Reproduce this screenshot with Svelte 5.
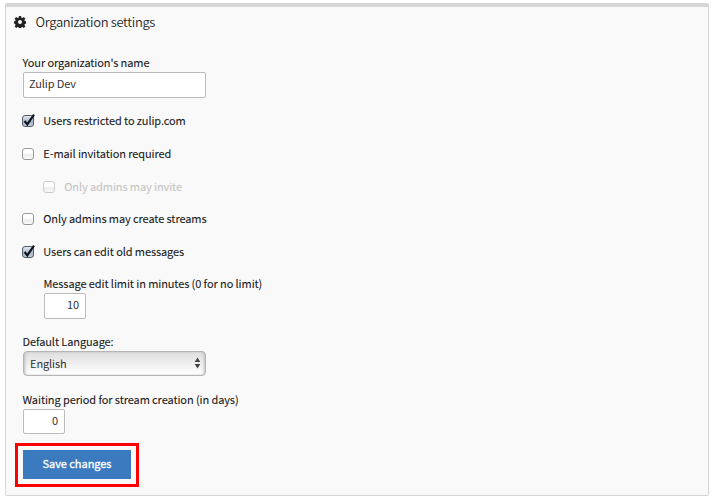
<script>
  let name = $state('Zulip Dev');
  let limit = $state('10');
  let waiting = $state('0');
  const permissions = [
    { text: 'Users restricted to zulip.com', checked: true },
    { text: 'E-mail invitation required', checked: false },
    { text: 'Only admins may invite', checked: false, nested: true },
    { text: 'Only admins may create streams', checked: false },
    { text: 'Users can edit old messages', checked: true }
  ];
</script>

<main class="panel">
  <header>
    <svg class="gear" viewBox="0 0 24 24" width="12" height="12" aria-hidden="true">
      <path fill-rule="evenodd" d="M9.800 0h4.400l.6 3.300 2 .9 2.800-2 3.200 3.200-2 2.800.9 2 3.300.600v4.400l-3.300.6-.9 2 2 2.800-3.200 3.200-2.800-2-2 .9-.6 3.300H9.800l-.6-3.300-2-.9-2.800 2-3.200-3.200 2-2.800-.9-2L0 15.200v-4.400L2.300 10.200l.9-2-2-2.800 3.200-3.200 2.800 2 2-.9zM12 8a4 4 0 1 0 0 8a4 4 0 0 0 0-8z" />
    </svg>
    <h1>Organization settings</h1>
  </header>
  <form onsubmit={(e) => e.preventDefault()}>
    <label for="name" class="caption">Your organization's name</label>
    <input id="name" class="field" bind:value={name} />

    <div class="checks">
      {#each permissions as item}
        <label class="check" class:nested={item.nested}>
          <span class="box" class:on={item.checked}>
            {#if item.checked}
              <svg viewBox="0 0 15 15" width="15" height="15" aria-hidden="true">
                <path d="M3.600 7L6.300 10.400L13 .6" />
              </svg>
            {/if}
          </span>
          <span class="text">{item.text}</span>
        </label>
      {/each}
    </div>

    <div class="inset">
      <label for="limit" class="caption">Message edit limit in minutes (0 for no limit)</label>
      <input id="limit" class="field number" bind:value={limit} />
    </div>

    <label for="language" class="caption language">Default Language:</label>
    <button type="button" id="language" class="select">
      <span class="text">English</span>
      <svg viewBox="0 0 7 12" width="7" height="12" aria-hidden="true">
        <path d="M3.500 .5L6.300 5H.7zM3.500 11.500L.7 7h5.600z" />
      </svg>
    </button>

    <label for="waiting" class="caption period">Waiting period for stream creation (in days)</label>
    <input id="waiting" class="field number short" bind:value={waiting} />

    <div class="highlight"><button class="save">Save changes</button></div>
  </form>
</main>

<style>
  :global(body) { margin: 0; background: #fff; }
  .panel {
    box-sizing: border-box;
    width: 704px;
    height: 493px;
    margin: 3px 0 0 5px;
    border: 1px solid #d6d6d6;
    border-top-width: 4px;
    border-radius: 2px;
    background: #f9f9f9;
    color: #181818;
    font: 11px/18px "Noto Sans CJK JP", "Noto Sans", sans-serif;
    letter-spacing: -0.100px;
  }
  header { display: flex; align-items: center; height: 30px; padding-left: 8px; }
  .gear { fill: #222; }
  h1 { margin: 0 0 0 9.500px; font-size: 13px; font-weight: 350; line-height: 20px; letter-spacing: -0.340px; color: #2a2a2a; }
  form { padding: 17px 0 0 17px; }
  .caption, .check { -webkit-text-stroke: 0.080px; }
  .caption { display: block; height: 18px; margin-left: -0.500px; line-height: 17px; white-space: nowrap; }
  .field {
    display: block;
    box-sizing: border-box;
    width: 183px;
    height: 26px;
    margin: 0;
    padding: 0 5px 4px;
    border: 1px solid #bbb;
    border-radius: 2px;
    outline: 0;
    background: #fff;
    color: #333;
    font: inherit;
    letter-spacing: -0.100px;
  }
  .number { width: 42px; padding-right: 6px; text-align: right; }
  .short { height: 25px; }
  .checks { display: flex; flex-direction: column; gap: 14.800px; padding-top: 14px; margin-left: -1px; }
  .check { display: flex; align-items: center; height: 18px; line-height: 17px; white-space: nowrap; }
  .text { padding-bottom: 1px; }
  .box {
    box-sizing: border-box;
    width: 12px;
    height: 12px;
    margin-right: 9.300px;
    border: 1px solid #999;
    border-radius: 3px;
    background: linear-gradient(#fff 40%, #ececec 60%, #fafafa);
  }
  .box.on { border-color: #555b69; background: linear-gradient(#e5eaf1, #a8b4c7 60%, #c2cddb); }
  .box svg { display: block; margin: -2px 0 0 -2px; overflow: visible; }
  .box path { fill: none; stroke: #10151f; stroke-width: 2.200; }
  .nested { margin-left: 21px; color: #c5c5c5; }
  .nested .box { border-color: #ccc; }
  .inset { padding: 14px 0 0 21px; }
  .language { margin-top: 14px; }
  .select {
    display: flex;
    box-sizing: border-box;
    width: 183px;
    height: 25px;
    align-items: center;
    justify-content: space-between;
    padding: 0 4px 1px 6px;
    border: 1px solid #b5b5b5;
    border-radius: 4px;
    background: linear-gradient(#dedede, #f2f2f2 60%, #fff);
    box-shadow: inset 2px 0 3px -1px #bbb, inset -2px 0 3px -1px #bbb;
    color: #333;
    font: inherit;
    letter-spacing: -0.100px;
  }
  .select svg { fill: #444; }
  .period { margin-top: 15px; }
  .highlight {
    box-sizing: border-box;
    width: 124px;
    height: 44px;
    margin: 9px 0 0 -8px;
    padding: 4px 5px;
    border: 3px solid #f00;
  }
  .save {
    display: block;
    width: 108px;
    height: 29px;
    padding: 0 0 3px;
    border: 0;
    background: #3b7abf;
    color: #fff;
    font: 11px/26px "Noto Sans CJK JP", "Noto Sans", sans-serif;
    letter-spacing: -0.050px;
    -webkit-text-stroke: 0.300px;
  }
</style>
